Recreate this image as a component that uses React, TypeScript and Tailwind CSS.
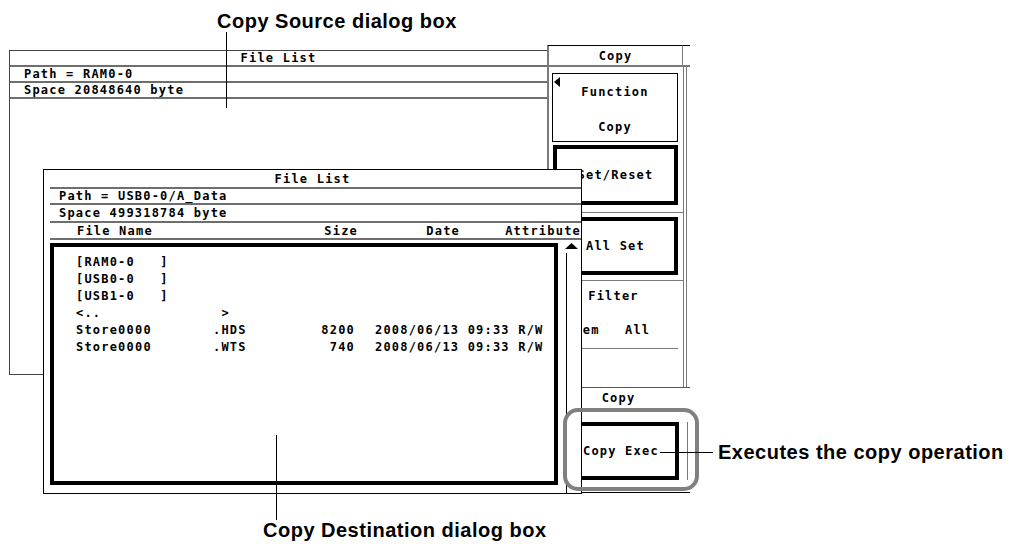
const mono =
  "font-['DejaVu_Sans_Mono',monospace] font-bold text-[12px] leading-none tracking-[1.2px] text-black whitespace-pre";
const label =
  "font-['Liberation_Sans',Arial,sans-serif] font-bold text-[20px] leading-[20px] tracking-[0.5px] text-black whitespace-nowrap";

const files = [
  { name: "[RAM0-0   ]", ext: "", size: "", date: "" },
  { name: "[USB0-0   ]", ext: "", size: "", date: "" },
  { name: "[USB1-0   ]", ext: "", size: "", date: "" },
  { name: "<..", ext: " >", size: "", date: "" },
  { name: "Store0000", ext: ".HDS", size: "8200", date: "2008/06/13 09:33 R/W" },
  { name: "Store0000", ext: ".WTS", size: "740", date: "2008/06/13 09:33 R/W" },
];

function SourceDialog() {
  return (
    <div className="absolute left-[9px] top-[50px] w-[538px] h-[325px] flex flex-col border-t border-l border-b border-[#444] bg-white">
      <div className="h-[16px] flex items-center justify-center border-b-2 border-[#6e6e6e]">
        <span className={mono}>File List</span>
      </div>
      <div className="h-[16px] flex items-center pl-[14px] border-b-2 border-[#6e6e6e]">
        <span className={mono}>Path = RAM0-0</span>
      </div>
      <div className="h-[16px] flex items-center pl-[14px] border-b-2 border-[#6e6e6e]">
        <span className={mono}>Space 20848640 byte</span>
      </div>
    </div>
  );
}

function MenuColumn() {
  return (
    <div className="absolute left-[547px] top-[45px] w-[143px] flex flex-col">
      {/* header */}
      <div className="flex h-[22px]">
        <div className="w-[136px] flex items-center justify-center border-t border-l-2 border-r border-b-2 border-[#7a7a7a] border-t-black">
          <span className={mono}>Copy</span>
        </div>
        <div className="flex-1 border-t border-b-2 border-[#7a7a7a] border-t-black" />
      </div>

      {/* soft keys */}
      <div className="w-[140px] h-[320px] flex flex-col border-l-2 border-r-4 border-double border-[#7a7a7a] pt-[6px]">
        <div className="relative ml-[3px] w-[126px] h-[69px] border border-black flex flex-col items-center">
          <svg className="absolute left-[1px] top-[3px]" width="6" height="10" viewBox="0 0 6 10">
            <polygon points="6,0 6,10 0,5" fill="#000" />
          </svg>
          <span className={`${mono} mt-[12px]`}>Function</span>
          <span className={`${mono} mt-[23px]`}>Copy</span>
        </div>

        <div className="mt-[3px] ml-[4px] w-[125px] h-[60px] border-4 border-black flex items-center justify-center">
          <span className={mono}>Set/Reset</span>
        </div>
        <div className="mt-[7px] h-px bg-[#7a7a7a]" />

        <div className="mt-[4px] ml-[4px] w-[125px] h-[58px] border-4 border-black flex items-center justify-center">
          <span className={mono}>All Set</span>
        </div>
        <div className="mt-[5px] h-px bg-[#7a7a7a]" />

        <div className="w-[129px] h-[68px] border-b border-[#7a7a7a] flex flex-col">
          <span className={`${mono} mt-[9px] self-center`}>Filter</span>
          <span className={`${mono} mt-[22px] pl-[17px]`}>Item   All</span>
        </div>
      </div>

      {/* execute */}
      <div className="w-[143px] h-[106px] flex flex-col border-t border-b border-[#555] border-b-black">
        <div className="h-[20px] flex items-center justify-center">
          <span className={mono}>Copy</span>
        </div>
        <div className="mt-[14px] flex">
          <div className="ml-[6px] w-[126px] h-[58px] border-4 border-black flex items-center pl-[26px]">
            <span className={mono}>Copy Exec</span>
          </div>
          <div className="ml-[8px] w-px bg-[#7a7a7a]" />
        </div>
      </div>
    </div>
  );
}

function DestDialog() {
  return (
    <div className="absolute left-[43px] top-[169px] w-[539px] h-[325px] bg-white border border-black flex flex-col">
      <div className="h-[17px] flex items-center justify-center">
        <span className={mono}>File List</span>
      </div>
      <div className="ml-[6px] flex-1 flex flex-col">
        <div className="h-[16px] border-t-2 border-[#6e6e6e] flex items-center pl-[9px]">
          <span className={mono}>Path = USB0-0/A_Data</span>
        </div>
        <div className="h-[18px] border-t-2 border-[#6e6e6e] flex items-center pl-[9px]">
          <span className={mono}>Space 499318784 byte</span>
        </div>
        <div className="h-[19px] border-y-2 border-[#6e6e6e] flex items-center">
          <div className="w-[308px] flex justify-between pl-[27px]">
            <span className={mono}>File Name</span>
            <span className={mono}>Size</span>
          </div>
          <span className={`${mono} w-[102px] text-right`}>Date</span>
          <span className={`${mono} flex-1 text-right`}>Attribute</span>
        </div>

        <div className="mt-[3px] flex-1 flex">
          <div className="w-[508px] h-[242px] border-4 border-black pt-[6px] pl-[22px]">
            {files.map((f, i) => (
              <div key={i} className="h-[17px] grid grid-cols-[137px_70px_72px_1fr] items-center">
                <span className={mono}>{f.name}</span>
                <span className={mono}>{f.ext}</span>
                <span className={`${mono} text-right`}>{f.size}</span>
                <span className={`${mono} pl-[20px]`}>{f.date}</span>
              </div>
            ))}
          </div>
          <div className="flex-1 flex flex-col">
            <svg className="ml-[7px]" width="13" height="6" viewBox="0 0 13 6">
              <polygon points="6.5,0 13,6 0,6" fill="#000" />
            </svg>
            <div className="ml-[8px] mt-[4px] w-px flex-1 bg-black" />
          </div>
        </div>
      </div>
    </div>
  );
}

export default function App() {
  return (
    <div className="relative w-[1018px] h-[544px] bg-white overflow-hidden">
      <SourceDialog />
      <MenuColumn />
      <DestDialog />

      {/* highlight around Copy Exec */}
      <div className="absolute left-[563px] top-[408px] w-[136px] h-[83px] rounded-[15px] border-4 border-[#808080]" />

      {/* callouts */}
      <span className={`${label} absolute left-[217px] top-[11px]`}>Copy Source dialog box</span>
      <div className="absolute left-[226px] top-[32px] w-px h-[76px] bg-black" />

      <div className="absolute left-[276px] top-[435px] w-px h-[85px] bg-black" />
      <span className={`${label} absolute left-[263px] top-[520px]`}>Copy Destination dialog box</span>

      <div className="absolute left-[660px] top-[452px] w-[53px] h-px bg-black" />
      <span className={`${label} absolute left-[718px] top-[442px]`}>Executes the copy operation</span>
    </div>
  );
}
